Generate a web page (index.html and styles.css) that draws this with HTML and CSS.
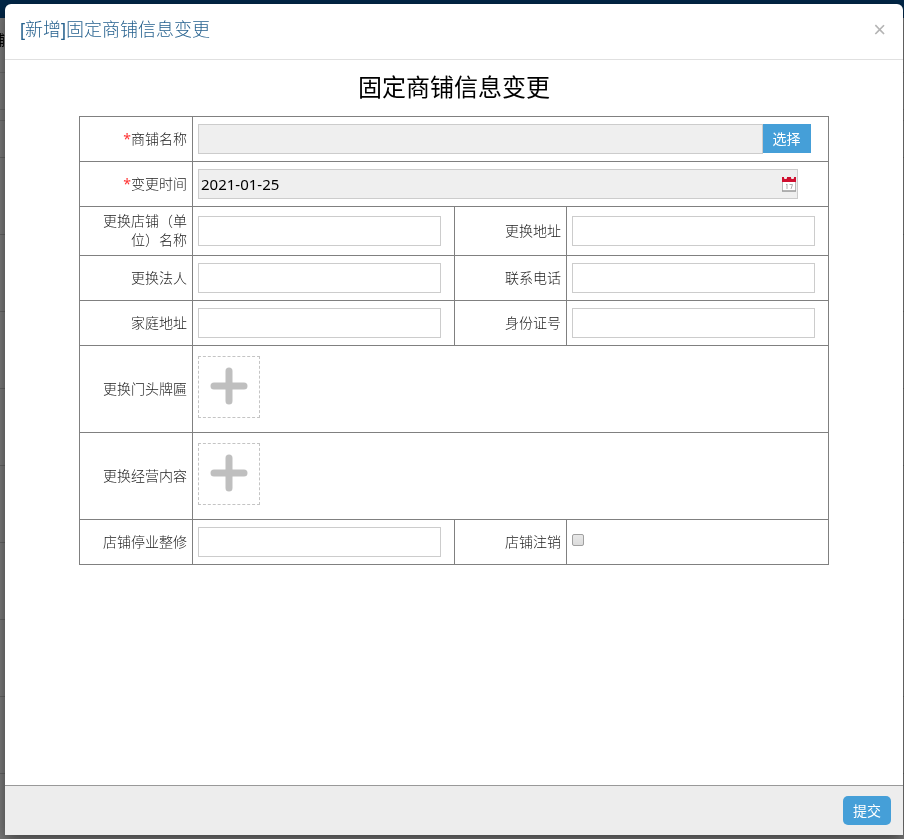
FILE: index.html
```html
<!DOCTYPE html>
<html lang="zh-CN">
<head>
    <meta charset="UTF-8">
    <meta name="viewport" content="width=device-width, initial-scale=1.0">
    <title>固定商铺信息变更</title>
    <link rel="stylesheet" href="styles.css">
</head>
<body>
    <!-- page behind the dialog -->
    <div class="page-behind" aria-hidden="true">
        <div class="page-top"></div>
        <div class="page-menu">铺</div>
        <div class="page-tools"></div>
        <div class="page-rows"></div>
    </div>

    <form class="modal">
        <div class="modal-header">
            <h4 class="modal-title">[新增]固定商铺信息变更</h4>
            <button type="button" class="close" aria-label="关闭">×</button>
        </div>

        <div class="modal-body">
            <h2 class="form-title">固定商铺信息变更</h2>
            <table class="form-table">
                <colgroup>
                    <col class="col-label-wide">
                    <col class="col-field">
                    <col class="col-label">
                    <col class="col-field">
                </colgroup>
                <tr>
                    <th><label for="shopName"><span class="required">*</span>商铺名称</label></th>
                    <td colspan="3">
                        <div class="pick-group">
                            <input type="text" id="shopName" class="field readonly" readonly>
                            <button type="button" class="pick-btn">选择</button>
                        </div>
                    </td>
                </tr>
                <tr>
                    <th><label for="changeDate"><span class="required">*</span>变更时间</label></th>
                    <td colspan="3">
                        <div class="date-group">
                            <input type="text" id="changeDate" class="field readonly" value="2021-01-25" readonly>
                            <svg class="date-icon" width="16" height="16" viewBox="0 0 16 16">
                                <rect x="1.5" y="1.5" width="13" height="13.500" fill="#fff" stroke="#bbb"/>
                                <path d="M1 15h14" stroke="#888"/>
                                <rect x="1" y="1" width="14" height="5" fill="#cf1030"/>
                                <rect x="3" y="0" width="3" height="3" rx="1" fill="#eee"/>
                                <rect x="10" y="0" width="3" height="3" rx="1" fill="#eee"/>
                                <path d="M5 9l1-1v5M8.500 8.500h3l-1.500 4.500" fill="none" stroke="#999" stroke-width="0.800"/>
                            </svg>
                        </div>
                    </td>
                </tr>
                <tr>
                    <th><label for="newName">更换店铺（单位）名称</label></th>
                    <td><input type="text" id="newName" class="field"></td>
                    <th><label for="newAddress">更换地址</label></th>
                    <td><input type="text" id="newAddress" class="field"></td>
                </tr>
                <tr>
                    <th><label for="newOwner">更换法人</label></th>
                    <td><input type="text" id="newOwner" class="field"></td>
                    <th><label for="phone">联系电话</label></th>
                    <td><input type="text" id="phone" class="field"></td>
                </tr>
                <tr>
                    <th><label for="homeAddress">家庭地址</label></th>
                    <td><input type="text" id="homeAddress" class="field"></td>
                    <th><label for="idCard">身份证号</label></th>
                    <td><input type="text" id="idCard" class="field"></td>
                </tr>
                <tr class="upload-row">
                    <th><label for="signPhoto">更换门头牌匾</label></th>
                    <td colspan="3">
                        <button type="button" id="signPhoto" class="upload">
                            <svg width="38" height="38" viewBox="0 0 38 38">
                                <path d="M19 4v30M4 19h30" stroke="#bfbfbf" stroke-width="7" stroke-linecap="round"/>
                            </svg>
                        </button>
                    </td>
                </tr>
                <tr class="upload-row">
                    <th><label for="businessPhoto">更换经营内容</label></th>
                    <td colspan="3">
                        <button type="button" id="businessPhoto" class="upload">
                            <svg width="38" height="38" viewBox="0 0 38 38">
                                <path d="M19 4v30M4 19h30" stroke="#bfbfbf" stroke-width="7" stroke-linecap="round"/>
                            </svg>
                        </button>
                    </td>
                </tr>
                <tr>
                    <th><label for="repair">店铺停业整修</label></th>
                    <td><input type="text" id="repair" class="field"></td>
                    <th><label for="cancelled">店铺注销</label></th>
                    <td><input type="checkbox" id="cancelled" class="check"></td>
                </tr>
            </table>
        </div>

        <div class="modal-footer">
            <button type="submit" class="submit-btn">提交</button>
        </div>
    </form>
</body>
</html>
```
FILE: styles.css
```css
* {
    box-sizing: border-box;
}

body {
    margin: 0;
    font-family: "Noto Sans CJK SC", sans-serif;
    font-size: 14px;
    line-height: 19px;
    color: #555;
    background-color: #7c7c7c;
}

button {
    font-family: inherit;
    cursor: pointer;
}

/* dimmed page under the dialog */
.page-behind {
    position: fixed;
    inset: 0;
    overflow: hidden;
}

.page-top {
    height: 18px;
    background-color: #022748;
}

.page-menu {
    display: flex;
    justify-content: flex-end;
    width: 5px;
    height: 54px;
    padding-top: 12px;
    color: #000;
}

.page-tools {
    height: 38px;
    margin-bottom: 10px;
    border: 1px solid #6c6c6c;
    border-width: 1px 0;
}

.page-rows {
    height: 100%;
    border-top: 1px solid #6c6c6c;
    background: linear-gradient(#666 1px, transparent 1px) 0 36px / 100% 77px;
}

/* dialog */
.modal {
    position: relative;
    display: flex;
    flex-direction: column;
    min-height: calc(100vh - 8px);
    margin: 4px 1px 4px 5px;
    background-color: #fff;
    border-radius: 6px 6px 0 0;
    box-shadow: 0 5px 15px rgba(0, 0, 0, 0.5);
}

.modal-header {
    display: flex;
    justify-content: space-between;
    align-items: center;
    height: 56px;
    padding: 0 17px 3px 15px;
    border-bottom: 1px solid #e0e0e0;
}

.modal-title {
    margin: 0;
    font-family: "Liberation Sans", "Noto Sans CJK SC", sans-serif;
    font-size: 18px;
    font-weight: 300;
    line-height: 27px;
    color: #27628f;
}

.close {
    padding: 0;
    border: none;
    background: none;
    font-family: "Liberation Sans", sans-serif;
    font-size: 22px;
    line-height: 22px;
    color: #b4b4b4;
}

.modal-body {
    flex: 1;
    padding: 9px 74px;
}

.form-title {
    margin: 0 0 13px;
    font-size: 24px;
    font-weight: normal;
    line-height: 34px;
    text-align: center;
    color: #000;
}

.form-table {
    width: 100%;
    table-layout: fixed;
    border-collapse: collapse;
}

.col-label-wide {
    width: 113px;
}

.col-label {
    width: 112px;
}

.form-table th,
.form-table td {
    height: 45px;
    padding: 5px;
    border: 1px solid #808080;
    vertical-align: middle;
}

.form-table th {
    font-weight: 300;
    line-height: 19px;
    text-align: right;
    color: #222;
    padding: 4px 5px 6px;
}

.required {
    font-family: "Noto Sans", sans-serif;
    font-weight: normal;
    line-height: 1;
    color: #f33;
}

.field {
    display: block;
    width: 97%;
    height: 30px;
    padding: 0 2px;
    border: 1px solid #ccc;
    background-color: #fff;
    font-family: "Noto Sans", sans-serif;
    font-size: 15px;
    color: #000;
}

.readonly {
    background-color: #efefef;
}

.pick-group {
    display: flex;
    width: 98%;
}

.pick-group .field {
    flex: 1;
}

.pick-btn {
    width: 48px;
    height: 29px;
    padding: 0 0 2px;
    border: none;
    background-color: #459fd8;
    font-size: 14px;
    color: #fff;
}

.date-group {
    position: relative;
    width: 96%;
}

.date-group .field {
    width: 100%;
}

.date-icon {
    position: absolute;
    top: 7px;
    right: 1px;
}

.form-table .upload-row td {
    height: 87px;
    padding: 10px 5px 14px;
}

.upload {
    display: flex;
    justify-content: center;
    align-items: flex-start;
    width: 62px;
    height: 62px;
    padding: 10px 1px 0 0;
    border: 1px dashed #c4c4c4;
    background: none;
}

.check {
    display: block;
    appearance: none;
    width: 12px;
    height: 12px;
    margin: 0 0 4px;
    border: 1px solid #a0a0a0;
    border-radius: 2px;
    background: linear-gradient(#e8e8e8, #dcdcdc);
}

.check:checked {
    background: #459fd8;
}

.modal-footer {
    display: flex;
    justify-content: flex-end;
    padding: 10px 12px;
    border-top: 1px solid #999;
    background-color: #ededed;
}

.submit-btn {
    width: 48px;
    height: 29px;
    padding: 0 0 2px;
    border: none;
    border-radius: 5px;
    background-color: #459fd8;
    font-size: 14px;
    color: #fff;
}
```
